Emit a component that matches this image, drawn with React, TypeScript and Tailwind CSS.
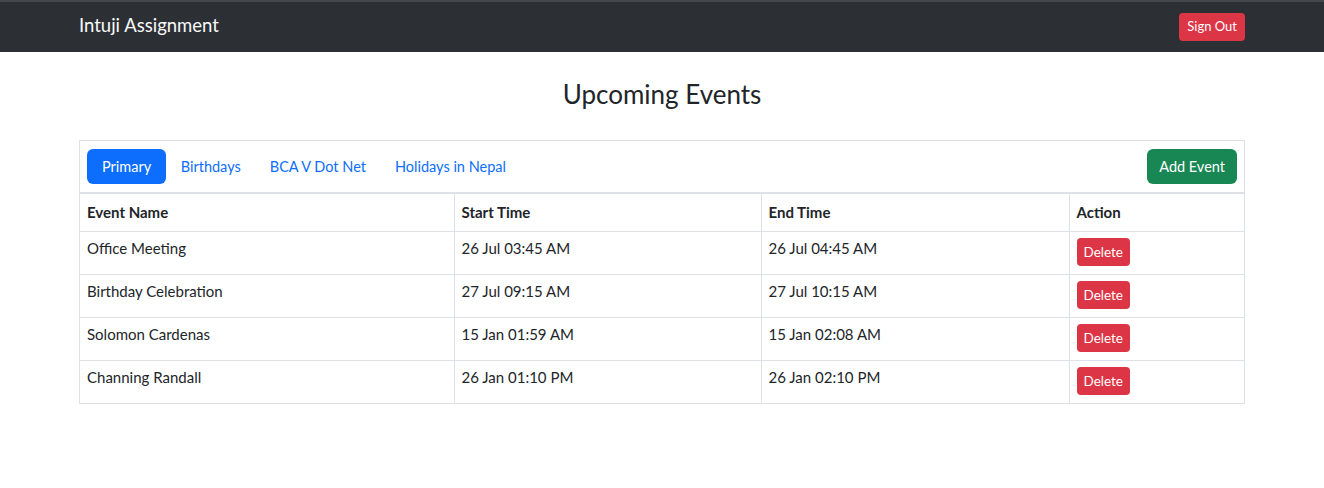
import React from "react"

const events = [
  { name: "Office Meeting", start: "26 Jul 03:45 AM", end: "26 Jul 04:45 AM" },
  { name: "Birthday Celebration", start: "27 Jul 09:15 AM", end: "27 Jul 10:15 AM" },
  { name: "Solomon Cardenas", start: "15 Jan 01:59 AM", end: "15 Jan 02:08 AM" },
  { name: "Channing Randall", start: "26 Jan 01:10 PM", end: "26 Jan 02:10 PM" },
]

const tabs = ["Primary", "Birthdays", "BCA V Dot Net", "Holidays in Nepal"]

export default function App() {
  return (
    <div className="min-h-[488px] bg-white text-[#212529] font-['Lato','Noto_Sans',sans-serif]">
      {/* Navbar */}
      <nav className="bg-[#2c3035] border-t-2 border-[#45494e]">
        <div className="w-[1166px] mx-auto h-[50px] flex items-center justify-between">
          <span className="text-[18.5px] text-[#f8f9fa] pb-[3px]">Intuji Assignment</span>
          <button className="h-[28px] px-2 rounded bg-[#dc3545] text-white text-[13px]">
            Sign Out
          </button>
        </div>
      </nav>

      <div className="w-[1166px] mx-auto">
        <h3 className="text-center text-[26px] mt-[27px] mb-[30px] leading-[1.2]">Upcoming Events</h3>

        {/* Card */}
        <div className="border border-[#dee2e6]">
          <div className="flex items-center justify-between px-[7px] h-[53px] border-b-2 border-[#dee2e6]">
            <div className="flex items-center">
              {tabs.map((t, i) => (
                <span
                  key={t}
                  className={
                    i === 0
                      ? "h-[35px] px-[15px] flex items-center rounded-md bg-[#0d6efd] text-white text-[14.5px]"
                      : "h-[35px] px-[14.5px] flex items-center text-[#0d6efd] text-[14.5px]"
                  }
                >
                  {t}
                </span>
              ))}
            </div>
            <button className="h-[35px] px-3 rounded-md bg-[#198754] text-white text-[14.5px]">
              Add Event
            </button>
          </div>

          <table className="w-full border-collapse text-[15px]">
            <thead>
              <tr className="h-[37px]">
                <th className="w-[374px] text-left font-bold px-[7px] border-r border-[#dee2e6]">Event Name</th>
                <th className="w-[307px] text-left font-bold px-[7px] border-r border-[#dee2e6]">Start Time</th>
                <th className="w-[308px] text-left font-bold px-[7px] border-r border-[#dee2e6]">End Time</th>
                <th className="text-left font-bold px-[7px]">Action</th>
              </tr>
            </thead>
            <tbody>
              {events.map((e) => (
                <tr key={e.name} className="h-[43px] border-t border-[#dee2e6]">
                  <td className="px-[7px] pt-[5px] align-top border-r border-[#dee2e6]">{e.name}</td>
                  <td className="px-[7px] pt-[5px] align-top border-r border-[#dee2e6]">{e.start}</td>
                  <td className="px-[7px] pt-[5px] align-top border-r border-[#dee2e6]">{e.end}</td>
                  <td className="px-[7px] align-top pt-[6px]">
                    <button className="h-[28px] px-[7px] rounded bg-[#dc3545] text-white text-[13.5px]">
                      Delete
                    </button>
                  </td>
                </tr>
              ))}
            </tbody>
          </table>
        </div>
      </div>
    </div>
  )
}
